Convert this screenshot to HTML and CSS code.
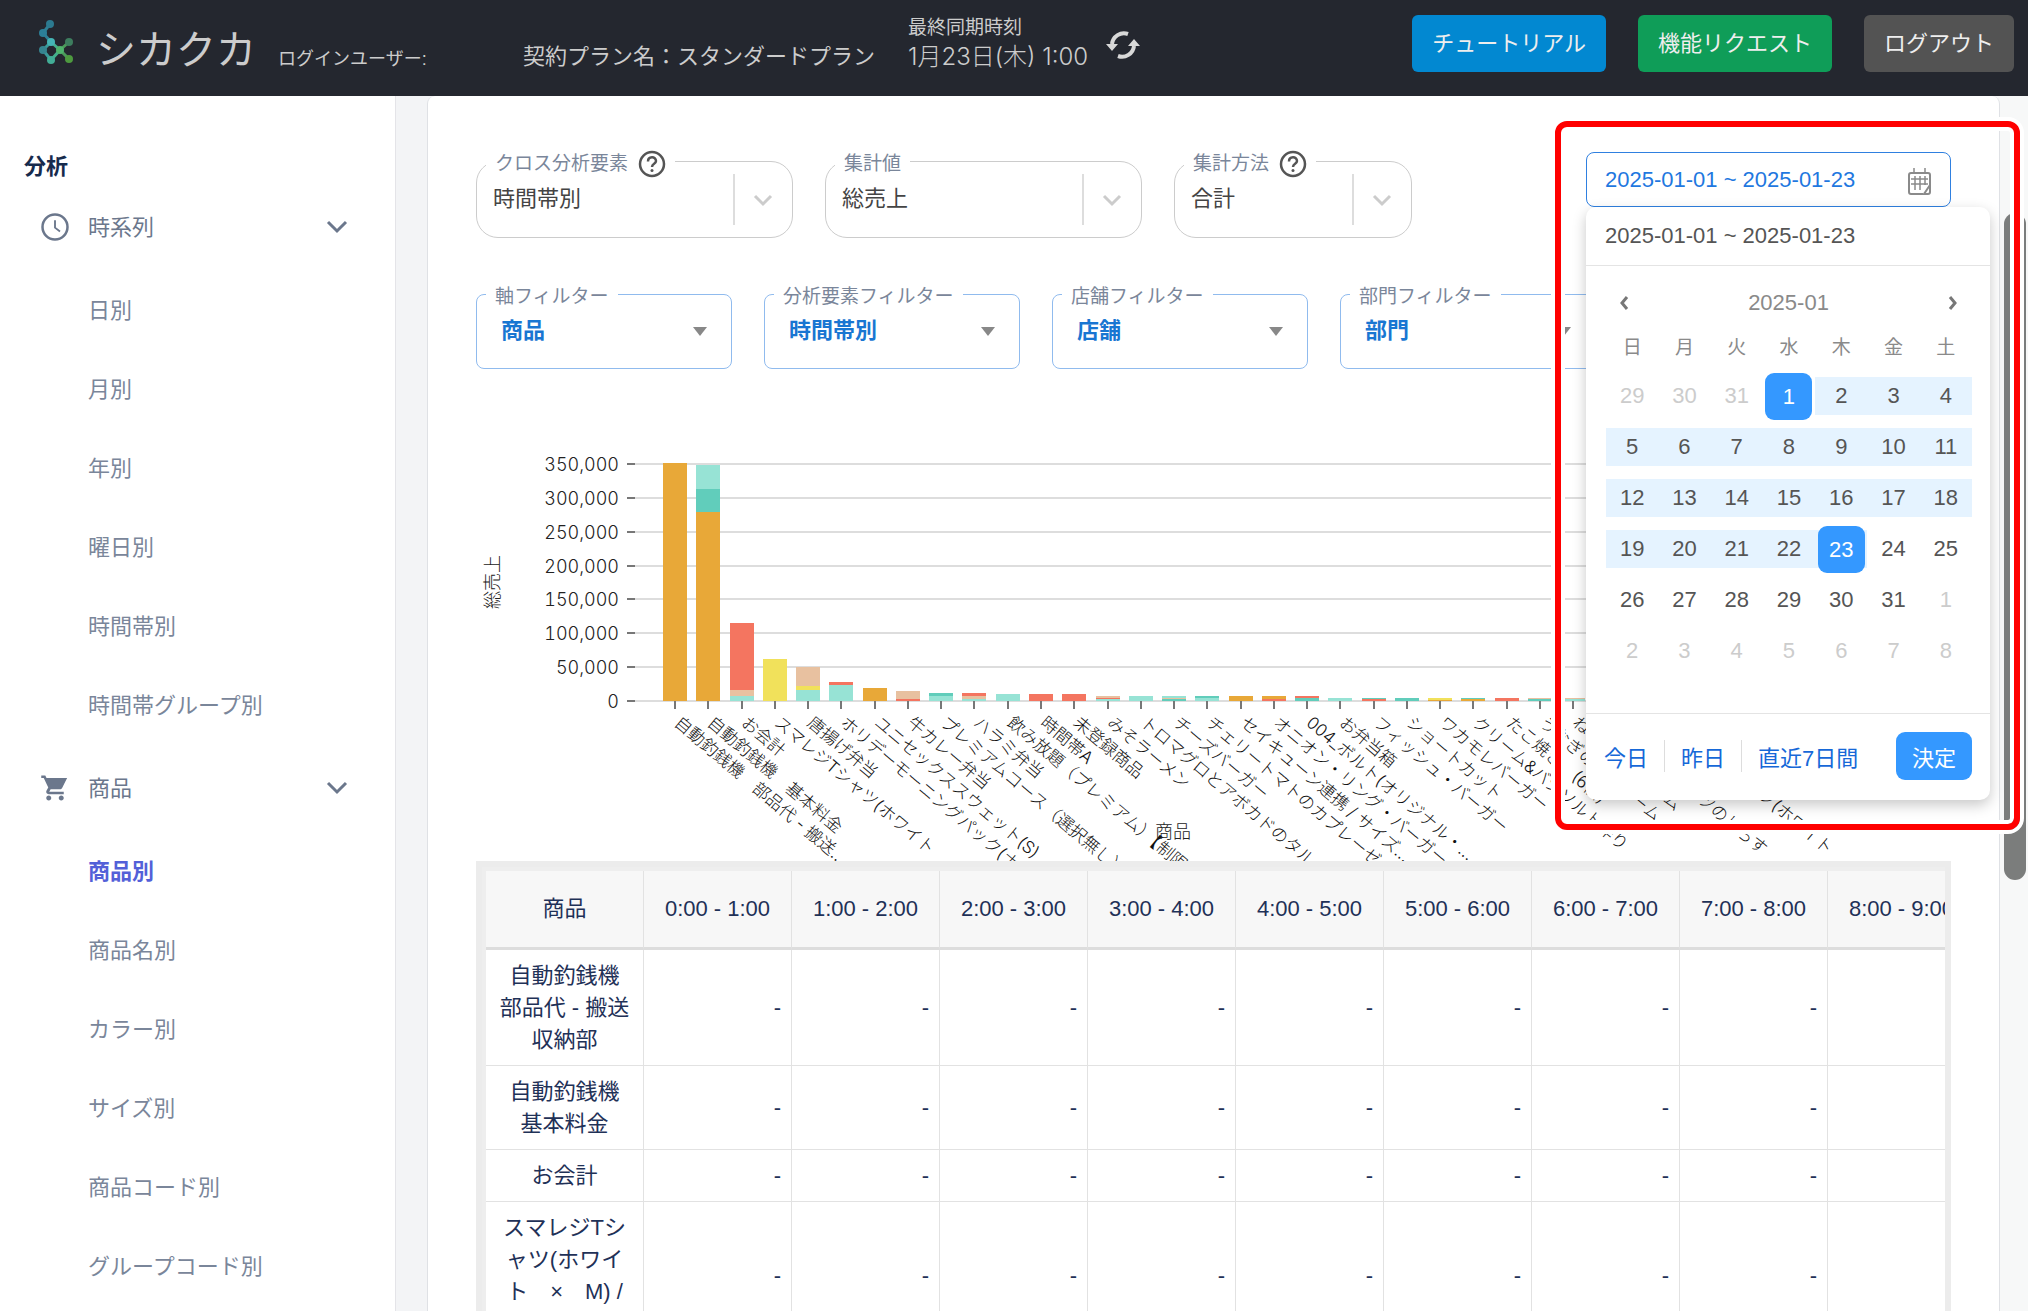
FILE: index.html
```html
<!DOCTYPE html>
<html lang="ja">
<head>
  <meta charset="UTF-8">
  <title>シカクカ - 商品別分析</title>
  <link rel="stylesheet" href="styles.css">
</head>
<body>
<header class="header">
  <svg class="logo" width="38" height="52" viewBox="0 0 38 52">
    <g stroke-width="3" fill="none">
      <path d="M13 4L6 13L14 22" stroke="#2f7f95"/>
      <path d="M14 22L6 30L14 40" stroke="#3a9a9a"/>
      <path d="M14 22L23 30L14 40" stroke="#44b08c"/>
      <path d="M32 22L23 30L32 39" stroke="#4c9a5a"/>
    </g>
    <circle cx="13" cy="4" r="4" fill="#2c7a90"/>
    <circle cx="6" cy="13" r="4" fill="#2c7f98"/>
    <circle cx="14" cy="22" r="4" fill="#45b5b5"/>
    <circle cx="6" cy="30" r="4" fill="#368590"/>
    <circle cx="23" cy="30" r="4" fill="#4fb36c"/>
    <circle cx="14" cy="40" r="4" fill="#42ad96"/>
    <circle cx="32" cy="22" r="4" fill="#3d7d5e"/>
    <circle cx="32" cy="39" r="4" fill="#4d9a3f"/>
  </svg>
  <span class="brand">シカクカ</span>
  <span class="user">ログインユーザー:</span>
  <span class="plan">契約プラン名：スタンダードプラン</span>
  <div class="sync">
    <span class="sync-label">最終同期時刻</span>
    <span class="sync-time">1月23日(木) 1:00</span>
  </div>
  <button class="sync-button" aria-label="再同期">
    <svg width="36" height="36" viewBox="0 0 36 36" fill="none" stroke="#d8d8d8" stroke-width="4">
      <path d="M23 7A12 12 0 0 0 7 17"/>
      <path d="M13 29A12 12 0 0 0 29 19"/>
      <path d="M1 17H13L7 24Z M23 19H35L29 12Z" fill="#d8d8d8" stroke="none"/>
    </svg>
  </button>
  <nav class="header-buttons">
    <button class="btn btn-blue">チュートリアル</button>
    <button class="btn btn-green">機能リクエスト</button>
    <button class="btn btn-gray">ログアウト</button>
  </nav>
</header>

<div class="layout">
  <aside class="sidebar">
    <h2>分析</h2>
    <button class="group">
      <svg width="30" height="30" viewBox="0 0 24 24" fill="none" stroke="#6b778c" stroke-width="2">
        <circle cx="12" cy="12" r="10"/>
        <path d="M12 6.500V12.500L16 15.500" stroke-width="1.500"/>
      </svg>
      <span>時系列</span>
      <svg class="arrow" width="22" height="14" viewBox="0 0 22 14" fill="none" stroke="#6b778c" stroke-width="3"><path d="M2 2L11 11L20 2"/></svg>
    </button>
    <ul>
      <li><a href="#">日別</a></li>
      <li><a href="#">月別</a></li>
      <li><a href="#">年別</a></li>
      <li><a href="#">曜日別</a></li>
      <li><a href="#">時間帯別</a></li>
      <li><a href="#">時間帯グループ別</a></li>
    </ul>
    <button class="group">
      <svg width="30" height="30" viewBox="0 0 24 24" fill="#6b778c">
        <path d="M7 18c-1.100 0-2 .9-2 2s.9 2 2 2 2-.9 2-2-.9-2-2-2zM1 2v2h2l3.600 7.600-1.350 2.450C4.500 15.400 5.500 17 7 17h12v-2H7.400l1.100-2h7.450c.75 0 1.400-.4 1.750-1L21.700 4H5.200l-.95-2H1zm16 16c-1.100 0-2 .9-2 2s.9 2 2 2 2-.9 2-2-.9-2-2-2z"/>
      </svg>
      <span>商品</span>
      <svg class="arrow" width="22" height="14" viewBox="0 0 22 14" fill="none" stroke="#6b778c" stroke-width="3"><path d="M2 2L11 11L20 2"/></svg>
    </button>
    <ul>
      <li><a href="#" class="active">商品別</a></li>
      <li><a href="#">商品名別</a></li>
      <li><a href="#">カラー別</a></li>
      <li><a href="#">サイズ別</a></li>
      <li><a href="#">商品コード別</a></li>
      <li><a href="#">グループコード別</a></li>
    </ul>
  </aside>

  <main class="main">
    <div class="card">
      <div class="controls">
        <div class="selects">
          <fieldset class="field">
            <legend>
              <label for="cross">クロス分析要素</label>
              <svg width="28" height="28" viewBox="0 0 28 28" fill="none" stroke="#555" stroke-width="2.500">
                <circle cx="14" cy="14" r="12"/>
                <path d="M10 11.500C10 6 18 6 18 11C18 14 14 13.500 14 17"/>
                <circle cx="14" cy="20.500" r="1.500" fill="#555" stroke="none"/>
              </svg>
            </legend>
            <select id="cross"><option>時間帯別</option></select>
            <svg class="chevron" width="20" height="14" viewBox="0 0 20 14" fill="none" stroke="#ccc" stroke-width="3"><path d="M2 3L10 11L18 3"/></svg>
          </fieldset>
          <fieldset class="field">
            <legend><label for="value">集計値</label></legend>
            <select id="value"><option>総売上</option></select>
            <svg class="chevron" width="20" height="14" viewBox="0 0 20 14" fill="none" stroke="#ccc" stroke-width="3"><path d="M2 3L10 11L18 3"/></svg>
          </fieldset>
          <fieldset class="field field-small">
            <legend>
              <label for="method">集計方法</label>
              <svg width="28" height="28" viewBox="0 0 28 28" fill="none" stroke="#555" stroke-width="2.500">
                <circle cx="14" cy="14" r="12"/>
                <path d="M10 11.500C10 6 18 6 18 11C18 14 14 13.500 14 17"/>
                <circle cx="14" cy="20.500" r="1.500" fill="#555" stroke="none"/>
              </svg>
            </legend>
            <select id="method"><option>合計</option></select>
            <svg class="chevron" width="20" height="14" viewBox="0 0 20 14" fill="none" stroke="#ccc" stroke-width="3"><path d="M2 3L10 11L18 3"/></svg>
          </fieldset>
        </div>

        <div class="datepicker">
          <div class="date-input">
            <input type="text" value="2025-01-01 ~ 2025-01-23" aria-label="期間">
            <svg width="24" height="28" viewBox="0 0 24 28" fill="none" stroke="#8a8a8a" stroke-width="2">
              <path d="M22 19V7Q22 5 20 5H3Q1 5 1 7V24Q1 26 3 26H15M22 17L16 26H20Q22 26 22 24V17"/>
              <path d="M6 0V6M17 0V6M3 11H20M3 16H20M7 8V22M12 8V22M17 8V17" stroke-width="1.500"/>
            </svg>
          </div>
          <div class="popup">
            <div class="popup-head">2025-01-01 ~ 2025-01-23</div>
            <div class="calendar">
              <div class="month">
                <button aria-label="前の月"><svg width="10" height="14" viewBox="0 0 10 14" fill="none" stroke="#777" stroke-width="3"><path d="M8 1L3 7L8 13"/></svg></button>
                <span>2025-01</span>
                <button aria-label="次の月"><svg width="10" height="14" viewBox="0 0 10 14" fill="none" stroke="#777" stroke-width="3"><path d="M2 1L7 7L2 13"/></svg></button>
              </div>
              <div class="week"><span>日</span><span>月</span><span>火</span><span>水</span><span>木</span><span>金</span><span>土</span></div>
              <div class="days" id="days"></div>
            </div>
            <div class="popup-foot">
              <button class="quick">今日</button>
              <button class="quick">昨日</button>
              <button class="quick">直近7日間</button>
              <button class="ok">決定</button>
            </div>
          </div>
        </div>
      </div>

      <div class="filters">
        <fieldset class="filter">
          <legend><label for="f1">軸フィルター</label></legend>
          <select id="f1"><option>商品</option></select>
        </fieldset>
        <fieldset class="filter">
          <legend><label for="f2">分析要素フィルター</label></legend>
          <select id="f2"><option>時間帯別</option></select>
        </fieldset>
        <fieldset class="filter">
          <legend><label for="f3">店舗フィルター</label></legend>
          <select id="f3"><option>店舗</option></select>
        </fieldset>
        <fieldset class="filter">
          <legend><label for="f4">部門フィルター</label></legend>
          <select id="f4"><option>部門</option></select>
        </fieldset>
      </div>

      <svg class="chart" id="chart"></svg>

      <div class="table-wrap">
        <table>
          <thead>
            <tr><th>商品</th><th>0:00 - 1:00</th><th>1:00 - 2:00</th><th>2:00 - 3:00</th><th>3:00 - 4:00</th><th>4:00 - 5:00</th><th>5:00 - 6:00</th><th>6:00 - 7:00</th><th>7:00 - 8:00</th><th>8:00 - 9:00</th></tr>
          </thead>
          <tbody>
            <tr><td>自動釣銭機<br>部品代 - 搬送<br>収納部</td><td>-</td><td>-</td><td>-</td><td>-</td><td>-</td><td>-</td><td>-</td><td>-</td><td>-</td></tr>
            <tr><td>自動釣銭機<br>基本料金</td><td>-</td><td>-</td><td>-</td><td>-</td><td>-</td><td>-</td><td>-</td><td>-</td><td>-</td></tr>
            <tr><td>お会計</td><td>-</td><td>-</td><td>-</td><td>-</td><td>-</td><td>-</td><td>-</td><td>-</td><td>-</td></tr>
            <tr><td>スマレジTシ<br>ャツ(ホワイ<br>ト　×　M) /<br>ホワイト</td><td>-</td><td>-</td><td>-</td><td>-</td><td>-</td><td>-</td><td>-</td><td>-</td><td>-</td></tr>
          </tbody>
        </table>
      </div>
    </div>
  </main>
</div>

<div class="scroll-thumb"></div>
<div class="highlight"></div>
<script src="chart.js"></script>
</body>
</html>
```
FILE: styles.css
```css
* { box-sizing: border-box; }
body {
  margin: 0;
  height: 100vh;
  overflow: hidden;
  display: flex;
  flex-direction: column;
  font-family: "Liberation Sans", "Noto Sans CJK JP", sans-serif;
  font-size: 22px;
  background: #f3f4f6;
}
button, select, input { font: inherit; border: 0; background: none; padding: 0; margin: 0; }

/* header */
.header {
  flex: none;
  height: 96px;
  padding: 0 14px 24px 37px;
  display: flex;
  align-items: flex-end;
  background: #24272f;
  color: #ccc;
  line-height: 30px;
  white-space: nowrap;
}
.brand { margin-left: 21px; font-size: 40px; line-height: 44px; }
.user { margin-left: 22px; width: 245px; font-size: 18px; line-height: 26px; }
.sync { margin-left: 33px; display: flex; flex-direction: column; line-height: 28px; font-family: Inter, "Noto Sans CJK JP", sans-serif; }
.sync-label { font-size: 19px; }
.sync-time { font-size: 24px; font-weight: 300; line-height: 30px; }
.sync-button { margin-left: 17px; height: 46px; }
.header-buttons { margin-left: auto; display: flex; gap: 32px; }
.btn { height: 57px; padding: 0 20px; border-radius: 6px; color: #eee; }
.btn-blue { background: #0288d1; }
.btn-green { background: #0f9d58; }
.btn-gray { background: #535353; }

/* sidebar */
.layout { flex: 1; min-height: 0; display: grid; grid-template-columns: 396px 1fr; overflow: hidden; }
.sidebar { padding-top: 54px; background: #fff; border-right: 1px solid #e4e4e8; color: #6b778c; }
.sidebar h2 { margin: 0; padding-left: 24px; font-size: 22px; line-height: 33px; color: #172b4d; }
.group { width: 100%; height: 87px; padding: 0 47px 0 40px; display: flex; align-items: center; gap: 18px; color: inherit; }
.group span { padding-bottom: 3px; }
.group .arrow { margin-left: auto; }
.sidebar ul { list-style: none; margin: 0; padding: 0; }
.sidebar li { height: 79px; padding: 0 0 4px 88px; display: flex; align-items: center; }
.sidebar a { color: #7a869a; text-decoration: none; }
.sidebar a.active { color: #5260d8; font-weight: bold; }

/* main card */
.main { min-width: 0; padding: 0 28px 0 31px; background: linear-gradient(to right, #f3f4f6 50%, #f7f8f8 50%); }
.card { height: 100%; padding: 52px 48px 0; background: #fff; border: solid #dfe1e5; border-width: 0 1px; border-radius: 8px 8px 0 0; }
.controls { height: 90px; display: flex; justify-content: space-between; }
.selects { display: flex; gap: 32px; }
fieldset { min-width: 0; margin: 0; padding: 0; }
legend { height: 26px; margin-left: 9px; padding: 0 9px; display: flex; align-items: center; gap: 10px; font-size: 19px; color: #7a869a; white-space: nowrap; }
.field { position: relative; width: 317px; height: 90px; border: 1px solid #ccc; border-radius: 22px; }
.field-small { width: 238px; }
.field legend svg { margin-top: 6px; }
.field select { appearance: none; width: 100%; height: 51px; padding: 0 0 3px 16px; color: #444; }
.field::after { content: ""; position: absolute; right: 57px; top: 0; height: 51px; border-left: 2px solid #ddd; }
.chevron { position: absolute; right: 19px; top: 19px; }
.filters { margin-top: 43px; display: flex; gap: 32px; }
.filter { position: relative; flex: none; width: 256px; height: 88px; border: 1px solid #90bbee; border-radius: 8px; }
.filter select { appearance: none; width: 100%; height: 46px; padding-left: 24px; color: #1976d2; font-weight: bold; }
.filter::after { content: ""; position: absolute; right: 24px; top: 20px; border: 7px solid transparent; border-top: 9px solid #888; border-bottom: 0; }

/* date range picker */
.datepicker { position: relative; z-index: 2; width: 365px; margin-top: 4px; }
.date-input { height: 55px; padding: 0 18px; display: flex; align-items: center; border: 1px solid #2f80e0; border-radius: 8px; background: #fff; }
.date-input input { flex: 1; min-width: 0; color: #1f78e0; }
.date-input svg { margin-top: 4px; }
.popup { position: absolute; left: 0; top: 55px; width: 404px; background: #fff; border-radius: 10px; box-shadow: 0 5px 14px rgba(0, 0, 0, .22); color: #555; }
.popup-head { height: 59px; padding-left: 19px; line-height: 57px; border-bottom: 1px solid #e4e4e4; }
.calendar { padding: 10px 18px 43px 20px; }
.month { height: 54px; padding: 0 14px 0 13px; display: flex; align-items: center; justify-content: space-between; color: #8a8a8a; }
.month button { display: flex; }
.week { display: grid; grid-template-columns: repeat(7, 1fr); text-align: center; line-height: 36px; font-size: 19px; color: #8a8a8a; }
.days { margin-top: 11px; display: grid; grid-template-columns: repeat(7, 1fr); row-gap: 13px; }
.day { height: 38px; display: flex; align-items: center; justify-content: center; color: #555; }
.day.out { color: #ccc; }
.day.range { background: #e5f3ff; }
.day.selected span { flex: none; width: 47px; line-height: 47px; border-radius: 9px; background: #3498ff; color: #fff; }
.popup-foot { height: 87px; padding: 0 18px 2px 2px; display: flex; align-items: center; border-top: 1px solid #e4e4e4; }
.quick { height: 32px; padding: 0 16px; color: #1668d8; }
.quick + .quick { border-left: 1px solid #ddd; }
.ok { margin-left: auto; width: 76px; height: 48px; border-radius: 9px; background: #3498ff; color: #fff; }

/* chart */
.chart { display: block; width: 100%; height: 492px; overflow: hidden; font-size: 18px; font-weight: 300; font-family: Inter, "Noto Sans CJK JP", sans-serif; fill: #222; }
.chart .num { font-variant-numeric: tabular-nums; text-anchor: end; }
.chart .name { font-size: 17px; fill: #111; }

/* table */
.table-wrap { overflow: hidden; border: 6px solid #ececec; padding: 4px 0 0 4px; background: #eee; }
table { width: 1490px; table-layout: fixed; border-collapse: separate; border-spacing: 0; background: #fff; color: #1f3157; line-height: 32px; }
th, td { padding: 10px 10px 9px; border-right: 1px solid #e2e2e2; border-bottom: 1px solid #e2e2e2; font-weight: normal; white-space: nowrap; }
th { height: 79px; width: 148px; padding: 0; background: #f7f7f7; border-bottom: 3px solid #ddd; }
th:first-child { width: 158px; }
td { text-align: right; }
td:first-child { text-align: center; }

.scroll-thumb { position: absolute; right: 2px; top: 213px; width: 22px; height: 667px; border-radius: 11px; background: #7b7d7c; }
.highlight { position: absolute; z-index: 3; right: 8px; top: 121px; width: 465px; height: 709px; border: 6px solid #f00; border-radius: 12px; box-shadow: 0 0 0 4px #fff, inset 0 0 0 4px #fff; pointer-events: none; }
```
FILE: chart.js
```js
// calendar
var days = document.getElementById('days');
for (var i = 0; i < 42; i++) {
  var d = i - 2;
  var num = d < 1 ? d + 31 : d > 31 ? d - 31 : d;
  var cls = 'day';
  if (d < 1 || d > 31) cls += ' out';
  if (d > 1 && d <= 23) cls += ' range';
  if (d === 1 || d === 23) cls += ' selected';
  days.insertAdjacentHTML('beforeend', '<button class="' + cls + '"><span>' + num + '</span></button>');
}

// stacked bar chart: segments are [color, height] from the bottom up
var A = '#e8a838', G = '#61cdbb', M = '#97e3d5', R = '#f47560', Y = '#f1e15b', P = '#e8c1a0';
var items = [
  ['自動釣銭機　部品代 - 搬送…', [[A, 238]]],
  ['自動釣銭機　基本料金', [[A, 189], [G, 23], [M, 24]]],
  ['お会計', [[M, 5], [P, 6], [R, 67]]],
  ['スマレジTシャツ(ホワイト', [[Y, 42]]],
  ['唐揚げ弁当', [[M, 11], [Y, 4], [P, 19]]],
  ['ホリデーモーニングパック(ナゲット)', [[M, 16], [R, 3]]],
  ['ユニセックススウェット(S)', [[A, 13]]],
  ['牛カレー弁当', [[R, 2], [P, 8]]],
  ['プレミアムコース（選択無し）', [[M, 5], [G, 3]]],
  ['ハラミ弁当', [[M, 2], [P, 3], [R, 3]]],
  ['飲み放題（プレミアム）【制限…', [[M, 7]]],
  ['時間帯A', [[R, 7]]],
  ['未登録商品', [[R, 7]]],
  ['みそラーメン', [[M, 2], [R, 1], [P, 2]]],
  ['トロマグロとアボカドのタルタル', [[M, 5]]],
  ['チーズバーガー', [[G, 2], [P, 1], [M, 2]]],
  ['チェリートマトのカプレーゼ', [[M, 3], [G, 2]]],
  ['セイキューン連携 / サイズ…', [[A, 5]]],
  ['オニオン・リング・バーガー', [[R, 2], [A, 3]]],
  ['004_ボルト(オリジナル・…', [[G, 3], [R, 2]]],
  ['お弁当箱', [[M, 3]]],
  ['フィッシュ・バーガー', [[R, 2], [G, 1]]],
  ['ショートカット', [[G, 3]]],
  ['ワカモレバーガー', [[A, 1], [Y, 2]]],
  ['クリーム&バジソルト作り', [[A, 2], [G, 1]]],
  ['たこ焼き　(6個)', [[R, 3]]],
  ['うなぎの生クリーム', [[G, 2], [P, 1]]],
  ['ねぎとろクリーム', [[M, 2], [P, 1]]],
  ['やわらかキャベツのしらす', [[M, 3]]],
  ['お茶', [[G, 3]]],
  ['スマレジTシャツ(ホワイト', [[Y, 3]]]
];

var base = 332, left = 159, right = 1236, out = '';
for (var v = 0; v <= 350000; v += 50000) {
  var y = Math.round(base - v / 350000 * 237);
  out += '<path d="M' + left + ' ' + y + 'H' + right + '" stroke="#ddd" stroke-width="2"/>';
  out += '<path d="M151 ' + y + 'h8" stroke="#777" stroke-width="2"/>';
  out += '<text class="num" x="143" y="' + (y + 7) + '">' + v.toLocaleString('en-US') + '</text>';
}
items.forEach(function (item, i) {
  var x = Math.round(199 + i * 33.27);
  var y = base;
  item[1].forEach(function (seg) {
    y -= seg[1];
    out += '<rect x="' + (x - 12) + '" y="' + y + '" width="24" height="' + seg[1] + '" fill="' + seg[0] + '"/>';
  });
  out += '<path d="M' + x + ' ' + base + 'v8" stroke="#777" stroke-width="2"/>';
  out += '<text class="name" transform="translate(' + (x + 2) + ' ' + (base + 19) + ') rotate(40)" dy="6">' + item[0].replace('&', '&amp;') + '</text>';
});
out += '<text x="697" y="469" text-anchor="middle">商品</text>';
out += '<text transform="translate(23 213) rotate(-90)" text-anchor="middle">総売上</text>';
document.getElementById('chart').innerHTML = out;
```
